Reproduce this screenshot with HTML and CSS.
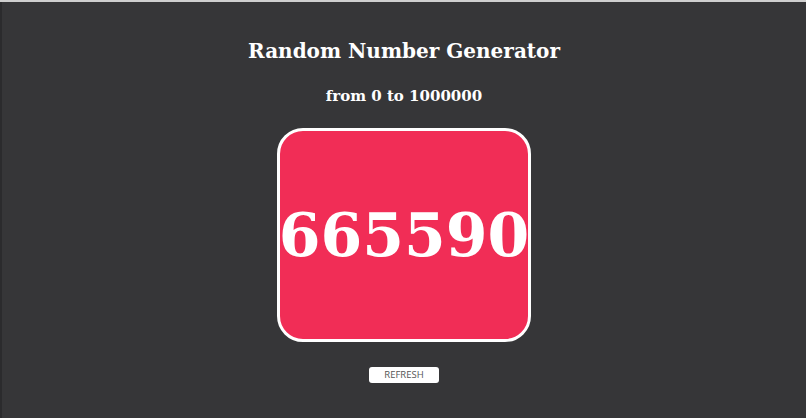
FILE: index.html
```html
<!DOCTYPE html>
<html>
<head>
<meta charset="utf-8">
<link rel="stylesheet" href="styles.css">
</head>
<body>
<div class="topbar"></div>
<div class="page">
  <div class="edge"></div>
  <main class="main">
    <h1 class="title">Random Number Generator</h1>
    <h2 class="subtitle">from 0 to 1000000</h2>
    <div class="card"><span class="number">665590</span></div>
    <button class="refresh">REFRESH</button>
  </main>
</div>
</body>
</html>
```
FILE: styles.css
```css
html, body {
  margin: 0;
  padding: 0;
  height: 100%;
  background: #363638;
}
body {
  display: flex;
  flex-direction: column;
  font-family: "DejaVu Serif", serif;
  color: #fff;
}
.topbar {
  height: 2px;
  background: #cfcfcf;
  flex: none;
}
.page {
  flex: 1;
  display: flex;
}
.edge {
  width: 2px;
  background: #2b2b2d;
}
.main {
  flex: 1;
  display: flex;
  flex-direction: column;
  align-items: center;
}
.title {
  margin: 37px 0 0;
  font-size: 20px;
  line-height: 24px;
  font-weight: bold;
}
.subtitle {
  margin: 23px 0 0;
  font-size: 15px;
  line-height: 20px;
  font-weight: bold;
}
.card {
  margin-top: 22px;
  box-sizing: border-box;
  width: 254px;
  height: 214px;
  border: 3px solid #fff;
  border-radius: 26px;
  background: #f12d56;
  display: flex;
  align-items: center;
  justify-content: center;
}
.number {
  font-size: 60px;
  font-weight: bold;
  line-height: 1;
}
.refresh {
  margin-top: 25px;
  width: 70px;
  height: 16px;
  padding: 0;
  border: none;
  border-radius: 3px;
  background: #fff;
  color: #555;
  font-family: "Open Sans", sans-serif;
  font-size: 9.5px;
  font-weight: 500;
  line-height: 16px;
}
```
